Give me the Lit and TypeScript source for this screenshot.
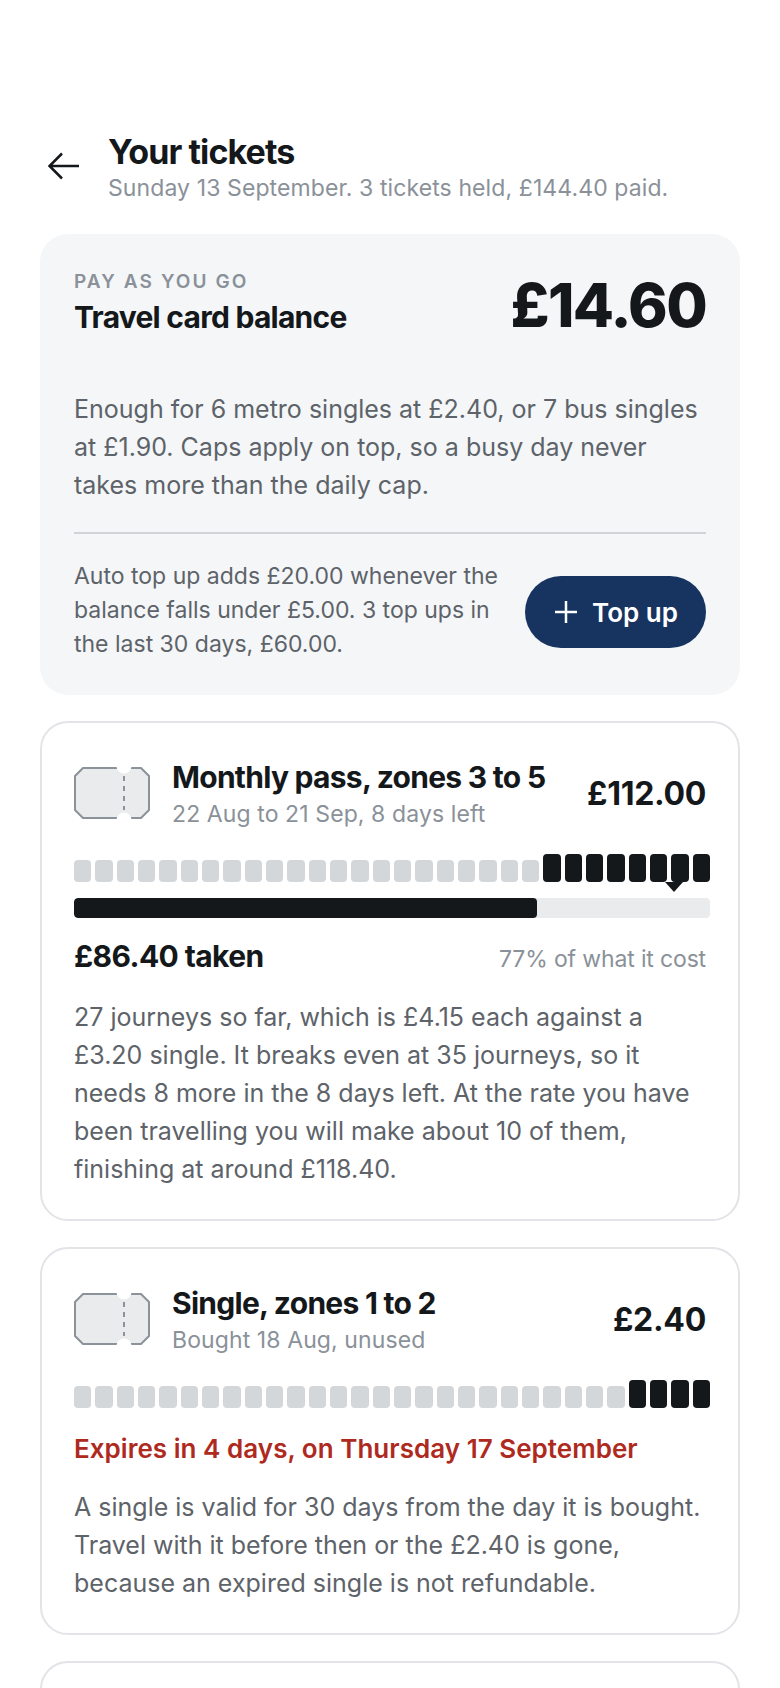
import { css, html, LitElement } from 'lit';
import { customElement, property } from 'lit/decorators.js';

const ticketIcon = html`
  <svg class="ticket-icon" viewBox="0 0 76 52" width="76" height="52" fill="none">
    <path d="M9 1H67L75 9V43L67 51H9L1 43V9Z" fill="#e9ebed" stroke="#8b9299" stroke-width="2" />
    <circle cx="50" cy="-1" r="7.5" fill="#fff" />
    <circle cx="50" cy="53" r="7.5" fill="#fff" />
    <path d="M50 9V43" stroke="#8b9299" stroke-width="2" stroke-dasharray="5 5" />
  </svg>
`;

@customElement('ticket-cells')
export class TicketCells extends LitElement {
  static styles = css`
    :host {
      display: block;
      width: calc(100% + 4px);
    }

    .cells {
      display: grid;
      grid-template-columns: repeat(30, 1fr);
      gap: 4px;
      align-items: end;
      height: 28px;
    }

    .cell {
      height: 22px;
      border-radius: 4px;
      background: #d3d7da;
    }

    .cell.left {
      height: 28px;
      background: #14181b;
    }
  `;

  @property({ type: Number }) left = 0;

  render() {
    const cells = Array.from({ length: 30 }, (_, i) => i >= 30 - this.left);
    return html`
      <div class="cells">
        ${cells.map((on) => html`<div class="cell ${on ? 'left' : ''}"></div>`)}
      </div>
    `;
  }
}

@customElement('app-root')
export class AppRoot extends LitElement {
  static styles = css`
    :host {
      display: block;
      height: 1688px;
      overflow: hidden;
      background: #fff;
      color: #14181b;
      font-family: Inter, "Liberation Sans", sans-serif;
    }

    .page {
      display: flex;
      flex-direction: column;
      gap: 26px;
      padding: 132px 40px 0;
    }

    .header {
      display: flex;
      align-items: center;
      margin-bottom: 4px;
    }

    .back {
      flex: none;
      width: 68px;
      height: 48px;
      display: flex;
      align-items: center;
      padding-left: 8px;
      margin-bottom: 4px;
      box-sizing: border-box;
    }

    .title {
      font-size: 34px;
      line-height: 40px;
      font-weight: 700;
      letter-spacing: -0.9px;
    }

    .sub {
      font-size: 23px;
      line-height: 32px;
      letter-spacing: 0.1px;
      color: #8a9199;
    }

    .balance {
      background: #f4f6f8;
      border-radius: 28px;
      padding: 33px 34px 34px;
    }

    .balance-top {
      display: flex;
      justify-content: space-between;
      align-items: center;
    }

    .eyebrow {
      font-size: 19px;
      line-height: 24px;
      font-weight: 600;
      letter-spacing: 2.1px;
      color: #8a9199;
    }

    .balance-name {
      margin-top: 4px;
      font-size: 30px;
      line-height: 38px;
      font-weight: 700;
      letter-spacing: -0.75px;
    }

    .amount {
      margin: 2px 0 -2px;
      font-size: 60px;
      line-height: 72px;
      font-weight: 800;
      letter-spacing: -1.65px;
    }

    .body {
      margin: 0;
      font-size: 25px;
      line-height: 38px;
      color: #5d6369;
    }

    .balance .body {
      margin-top: 51px;
    }

    .divider {
      height: 2px;
      margin: 28px 0 25px;
      background: #d0d4d8;
    }

    .topup {
      display: flex;
      align-items: center;
      justify-content: space-between;
      gap: 22px;
    }

    .topup-text {
      font-size: 23px;
      line-height: 34px;
      color: #5d6369;
    }

    .topup-btn {
      flex: none;
      display: flex;
      align-items: center;
      gap: 14px;
      height: 72px;
      margin-top: 4px;
      padding: 0 28px 0 29px;
      border-radius: 36px;
      background: #17335f;
      color: #fff;
      font-size: 26px;
      font-weight: 600;
    }

    .card {
      flex: none;
      border: 2px solid #e2e4e8;
      border-radius: 28px;
      padding: 35px 32px 31px;
    }

    .card.stub {
      height: 80px;
    }

    .ticket-head {
      display: flex;
      align-items: center;
      gap: 22px;
      margin-bottom: 24px;
    }

    .ticket-icon {
      flex: none;
      margin-bottom: 3px;
    }

    .ticket-info {
      flex: 1;
      min-width: 0;
    }

    .ticket-name {
      font-size: 30px;
      line-height: 38px;
      font-weight: 700;
      letter-spacing: -0.72px;
    }

    .ticket-dates {
      margin-top: 2px;
      font-size: 23px;
      line-height: 32px;
      letter-spacing: 0.1px;
      color: #8a9199;
    }

    .price {
      margin-bottom: 2px;
      font-size: 32px;
      font-weight: 700;
      letter-spacing: -0.3px;
    }

    .track-wrap {
      position: relative;
      width: calc(100% + 4px);
      margin-top: 16px;
    }

    .marker {
      position: absolute;
      left: 94.3%;
      top: -16px;
      width: 0;
      height: 0;
      margin-left: -9px;
      border-left: 9px solid transparent;
      border-right: 9px solid transparent;
      border-top: 10px solid #14181b;
    }

    .track {
      height: 20px;
      border-radius: 4px;
      background: #e9ebed;
      overflow: hidden;
    }

    .fill {
      height: 100%;
      border-radius: 4px;
      background: #14181b;
    }

    .taken {
      display: flex;
      justify-content: space-between;
      align-items: baseline;
      margin-top: 18px;
    }

    .taken-value {
      font-size: 30px;
      line-height: 40px;
      font-weight: 700;
      letter-spacing: -0.6px;
    }

    .taken-share {
      font-size: 23px;
      letter-spacing: -0.15px;
      color: #8a9199;
    }

    .card .body {
      margin-top: 22px;
    }

    .expiry {
      margin-top: 24px;
      font-size: 26px;
      line-height: 34px;
      font-weight: 600;
      letter-spacing: 0.03px;
      color: #ae2a1e;
    }
  `;

  render() {
    return html`
      <div class="page">
        <div class="header">
          <div class="back">
            <svg width="32" height="28" viewBox="0 0 32 28" fill="none">
              <path d="M31 14H2M14 1.5L1.5 14L14 26.5" stroke="#14181b" stroke-width="2.5" />
            </svg>
          </div>
          <div>
            <div class="title">Your tickets</div>
            <div class="sub">Sunday 13 September. 3 tickets held, £144.40 paid.</div>
          </div>
        </div>

        <section class="balance">
          <div class="balance-top">
            <div>
              <div class="eyebrow">PAY AS YOU GO</div>
              <div class="balance-name">Travel card balance</div>
            </div>
            <div class="amount">£14.60</div>
          </div>
          <p class="body">
            Enough for 6 metro singles at £2.40, or 7 bus singles at £1.90. Caps apply on top, so a busy day never takes more than the daily cap.
          </p>
          <div class="divider"></div>
          <div class="topup">
            <div class="topup-text">
              Auto top up adds £20.00 whenever the balance falls under £5.00. 3 top ups in the last 30 days, £60.00.
            </div>
            <div class="topup-btn">
              <svg width="24" height="24" viewBox="0 0 24 24" fill="none">
                <path d="M12 1V23M1 12H23" stroke="#fff" stroke-width="2.5" />
              </svg>
              Top up
            </div>
          </div>
        </section>

        <section class="card">
          <div class="ticket-head">
            ${ticketIcon}
            <div class="ticket-info">
              <div class="ticket-name">Monthly pass, zones 3 to 5</div>
              <div class="ticket-dates">22 Aug to 21 Sep, 8 days left</div>
            </div>
            <div class="price">£112.00</div>
          </div>
          <ticket-cells left="8"></ticket-cells>
          <div class="track-wrap">
            <div class="marker"></div>
            <div class="track"><div class="fill" style="width: 72.8%"></div></div>
          </div>
          <div class="taken">
            <div class="taken-value">£86.40 taken</div>
            <div class="taken-share">77% of what it cost</div>
          </div>
          <p class="body">
            27 journeys so far, which is £4.15 each against a £3.20 single. It breaks even at 35 journeys, so it needs 8 more in the 8 days left. At the rate you have been travelling you will make about 10 of them, finishing at around £118.40.
          </p>
        </section>

        <section class="card">
          <div class="ticket-head">
            ${ticketIcon}
            <div class="ticket-info">
              <div class="ticket-name">Single, zones 1 to 2</div>
              <div class="ticket-dates">Bought 18 Aug, unused</div>
            </div>
            <div class="price">£2.40</div>
          </div>
          <ticket-cells left="4"></ticket-cells>
          <div class="expiry">Expires in 4 days, on Thursday 17 September</div>
          <p class="body">
            A single is valid for 30 days from the day it is bought. Travel with it before then or the £2.40 is gone, because an expired single is not refundable.
          </p>
        </section>

        <section class="card stub"></section>
      </div>
    `;
  }
}
